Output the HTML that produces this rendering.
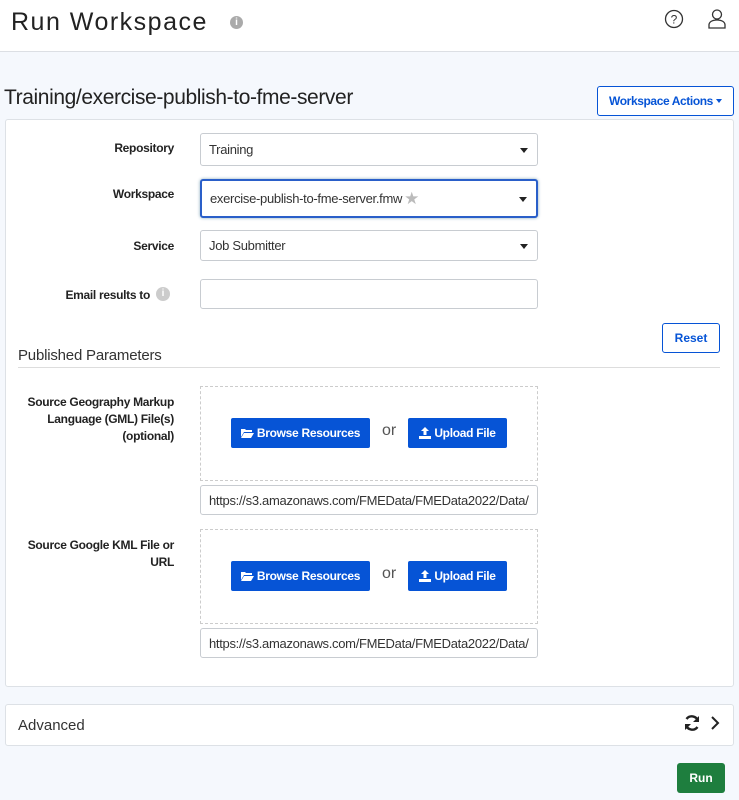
<!DOCTYPE html>
<html><head><style>
*{box-sizing:border-box;margin:0;padding:0}
body{width:739px;height:800px;background:#f5f8fd;font-family:"Liberation Sans",sans-serif;color:#333;position:relative;overflow:hidden}
.a{position:absolute}
.hdr{left:0;top:0;width:739px;height:52px;background:#fff;border-bottom:1px solid #dcdfe4}
.lbl{font-size:12px;font-weight:bold;letter-spacing:-0.3px;text-align:right;width:174px;left:0;color:#222}
.inp{left:200px;width:338px;background:#fff;border:1px solid #c8ccd1;border-radius:3px;font-size:13px;letter-spacing:-0.3px;padding-left:8px;display:flex;align-items:center;color:#333}
.car{position:absolute;right:9px;top:50%;margin-top:-2px;border-left:4px solid transparent;border-right:4px solid transparent;border-top:5px solid #222}
.dash{left:200px;width:338px;border:1px dashed #ccc}
.btn{background:#0654d6;color:#fff;font-size:12px;font-weight:bold;letter-spacing:-0.3px;border-radius:2px;display:flex;align-items:center;justify-content:center;height:30px}
.btn svg{margin-right:3px}
</style></head><body>
<div class="a hdr"></div>
<div class="a" style="left:11px;top:8px;font-size:25px;letter-spacing:1.5px;color:#222">Run Workspace</div>
<div class="a" style="left:230px;top:16px;width:13px;height:13px;border-radius:50%;background:#aaa;color:#fff;font-size:10px;font-weight:bold;text-align:center;line-height:13px">i</div>
<svg class="a" style="left:664px;top:9px" width="20" height="20" viewBox="0 0 20 20"><circle cx="10" cy="10" r="8.5" fill="none" stroke="#333" stroke-width="1.3"/><text x="10" y="14.5" font-size="12" text-anchor="middle" fill="#333" font-family="Liberation Sans">?</text></svg>
<svg class="a" style="left:707px;top:8px" width="20" height="22" viewBox="0 0 20 22"><circle cx="10" cy="6.5" r="4.5" fill="none" stroke="#333" stroke-width="1.3"/><path d="M2 20v-3c0-3 3-5 8-5s8 2 8 5v3z" fill="none" stroke="#333" stroke-width="1.3"/></svg>
<div class="a" style="left:4px;top:86px;font-size:21px;letter-spacing:-0.4px;color:#222">Training/exercise-publish-to-fme-server</div>
<div class="a" style="left:597px;top:86px;width:137px;height:30px;background:#fff;border:1px solid #0654d6;border-radius:3px;color:#0654d6;font-size:12px;font-weight:bold;letter-spacing:-0.4px;display:flex;align-items:center;justify-content:center">Workspace Actions <span style="display:inline-block;margin-left:3px;border-left:3.5px solid transparent;border-right:3.5px solid transparent;border-top:4px solid #0654d6"></span></div>
<div class="a" style="left:5px;top:119px;width:729px;height:568px;background:#fff;border:1px solid #dde1e6;border-radius:3px"></div>
<div class="a lbl" style="top:141px">Repository</div>
<div class="a inp" style="top:133px;height:33px">Training<span class="car"></span></div>
<div class="a lbl" style="top:187px">Workspace</div>
<div class="a inp" style="top:179px;height:39px;border:2px solid #2a5fc9;box-shadow:0 0 3px #8ab">exercise-publish-to-fme-server.fmw <span style="color:#bbb;font-size:17px;margin-left:2px">★</span><span class="car"></span></div>
<div class="a lbl" style="top:239px">Service</div>
<div class="a inp" style="top:230px;height:31px">Job Submitter<span class="car"></span></div>
<div class="a lbl" style="top:288px;width:150px">Email results to</div>
<div class="a" style="left:156px;top:287px;width:14px;height:14px;border-radius:50%;background:#ccc;color:#fff;font-size:10px;font-weight:bold;text-align:center;line-height:14px">i</div>
<div class="a inp" style="top:279px;height:30px"></div>
<div class="a" style="left:662px;top:323px;width:58px;height:30px;background:#fff;border:1px solid #0654d6;border-radius:3px;color:#0654d6;font-size:12px;font-weight:bold;display:flex;align-items:center;justify-content:center">Reset</div>
<div class="a" style="left:18px;top:347px;font-size:15px;color:#333;letter-spacing:-0.2px">Published Parameters</div>
<div class="a" style="left:18px;top:367px;width:702px;height:1px;background:#ddd"></div>
<div class="a lbl" style="top:394px;line-height:17px">Source Geography Markup<br>Language (GML) File(s)<br>(optional)</div>
<div class="a dash" style="top:386px;height:95px"></div>
<div class="a btn" style="left:231px;top:418px;width:139px"><svg width="13" height="10" viewBox="0 0 13 10"><path d="M0 1h4l1 1h6v2H3L0 9z M3 5h10l-3 5H0z" fill="#fff"/></svg>Browse Resources</div>
<div class="a" style="left:382px;top:422px;font-size:16px;color:#555">or</div>
<div class="a btn" style="left:408px;top:418px;width:99px"><svg width="12" height="12" viewBox="0 0 12 12"><path d="M6 0l4 4H7.5v4h-3V4H2z M0 9h12v3H0z" fill="#fff"/></svg>Upload File</div>
<div class="a inp" style="top:485px;height:30px">https://s3.amazonaws.com/FMEData/FMEData2022/Data/</div>
<div class="a lbl" style="top:537px;line-height:17px">Source Google KML File or<br>URL</div>
<div class="a dash" style="top:529px;height:95px"></div>
<div class="a btn" style="left:231px;top:561px;width:139px"><svg width="13" height="10" viewBox="0 0 13 10"><path d="M0 1h4l1 1h6v2H3L0 9z M3 5h10l-3 5H0z" fill="#fff"/></svg>Browse Resources</div>
<div class="a" style="left:382px;top:565px;font-size:16px;color:#555">or</div>
<div class="a btn" style="left:408px;top:561px;width:99px"><svg width="12" height="12" viewBox="0 0 12 12"><path d="M6 0l4 4H7.5v4h-3V4H2z M0 9h12v3H0z" fill="#fff"/></svg>Upload File</div>
<div class="a inp" style="top:628px;height:30px">https://s3.amazonaws.com/FMEData/FMEData2022/Data/</div>
<div class="a" style="left:5px;top:704px;width:729px;height:42px;background:#fff;border:1px solid #dde1e6;border-radius:3px"></div>
<div class="a" style="left:18px;top:717px;font-size:15px;color:#333">Advanced</div>
<svg class="a" style="left:683px;top:714px" width="18" height="18" viewBox="0 0 18 18"><path d="M15 7A6.5 6.5 0 0 0 3.5 5M3 11a6.5 6.5 0 0 0 11.5 2" fill="none" stroke="#222" stroke-width="2.4"/><path d="M16 2v6h-6zM2 16v-6h6z" fill="#222"/></svg>
<svg class="a" style="left:710px;top:716px" width="10" height="14" viewBox="0 0 10 14"><path d="M2 1l6 6-6 6" fill="none" stroke="#222" stroke-width="2"/></svg>
<div class="a" style="left:677px;top:763px;width:48px;height:30px;background:#1e7e3e;border-radius:3px;color:#fff;font-size:12px;font-weight:bold;display:flex;align-items:center;justify-content:center">Run</div>
</body></html>
